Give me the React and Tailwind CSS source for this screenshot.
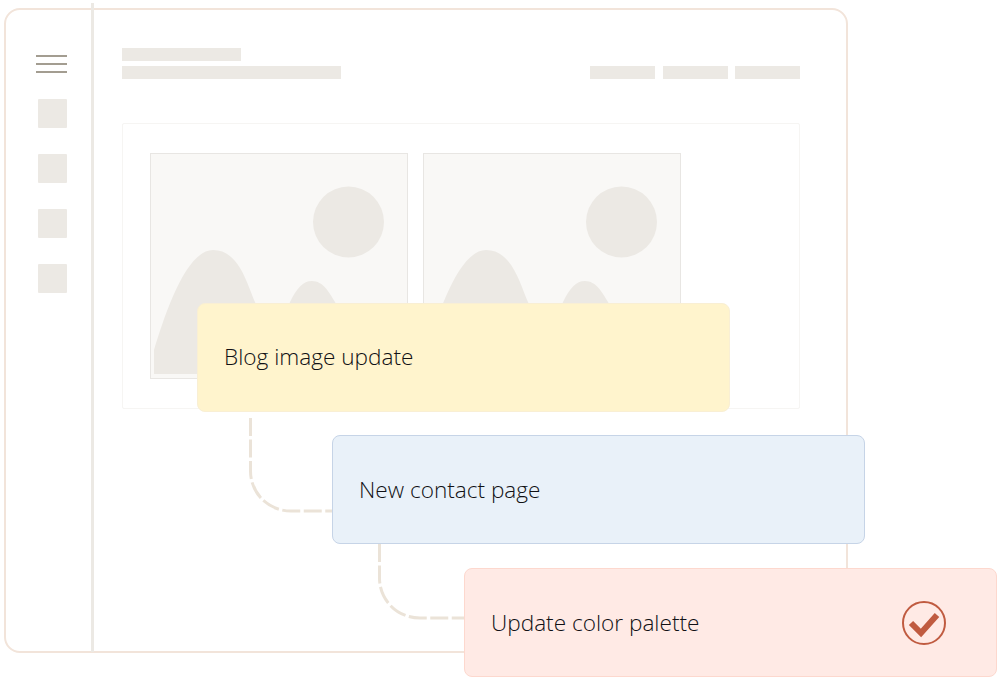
import React from "react";

const Thumb = () => {
  return (
    <div className="w-[258px] h-[226px] bg-[#f9f8f6] border border-[#e8e6e3]">
      <svg width="256" height="224" viewBox="0 0 256 224" className="block">
        <circle cx="197.500" cy="68" r="35.5" fill="#ece9e4" />
        <path
          d="M3 220V196C14 160 35 96 62 96C88 96 96 130 104 148C112 170 122 205 130 205C136 190 134 160 139 148C146 134 152 127 161 127C172 127 178 138 184 148C196 170 204 200 210 220Z"
          fill="#ece9e4"
        />
      </svg>
    </div>
  );
};

const Card = ({ className, children }) => {
  return (
    <div
      className={`absolute w-[533px] h-[109px] rounded-lg border flex items-center justify-between pl-[26px] text-[22.6px] font-light text-[#111115] ${className}`}
    >
      {children}
    </div>
  );
};

const App = () => {
  return (
    <div className="relative w-[1000px] h-[680px] bg-white overflow-hidden font-['Open_Sans',sans-serif]">
      <div className="pl-[4px] pt-[8px]">
        <div className="w-[844px] h-[645px] border-2 border-[#f2e4da] rounded-[16px] flex">
          <div className="w-[85px] shrink-0 pl-[30px] pt-[45px]">
            <div className="flex flex-col gap-[6.5px] w-[31px]">
              <div className="h-[1.5px] bg-[#a39d91]" />
              <div className="h-[1.5px] bg-[#a39d91]" />
              <div className="h-[1.5px] bg-[#a39d91]" />
            </div>
            <div className="flex flex-col gap-[26px] mt-[26px] ml-[2px]">
              <div className="w-[29px] h-[29px] rounded-[1px] bg-[#ece9e4]" />
              <div className="w-[29px] h-[29px] rounded-[1px] bg-[#ece9e4]" />
              <div className="w-[29px] h-[29px] rounded-[1px] bg-[#ece9e4]" />
              <div className="w-[29px] h-[29px] rounded-[1px] bg-[#ece9e4]" />
            </div>
          </div>
          <div className="w-[3px] shrink-0 -mt-[7px] -mb-[1px] bg-[#ece9e4]" />
          <div className="pl-[28px] pt-[38px] w-[706px]">
            <div className="flex justify-between items-end">
              <div>
                <div className="w-[119px] h-[13px] bg-[#ece9e4]" />
                <div className="w-[219px] h-[13px] mt-[5px] bg-[#ece9e4]" />
              </div>
              <div className="flex gap-[7.5px]">
                <div className="w-[65px] h-[13px] bg-[#ece9e4]" />
                <div className="w-[65px] h-[13px] bg-[#ece9e4]" />
                <div className="w-[65px] h-[13px] bg-[#ece9e4]" />
              </div>
            </div>
            <div className="w-[678px] h-[286px] mt-[44px] pl-[27px] pt-[29px] border border-[#f6f5f3] rounded-[2px] flex gap-[15px]">
              <Thumb />
              <Thumb />
            </div>
          </div>
        </div>
      </div>

      <svg
        width="1000"
        height="680"
        viewBox="0 0 1000 680"
        fill="none"
        className="absolute inset-0"
      >
        <path
          d="M250.500 418V471C250.500 493 268 511 291 511H333"
          stroke="#ebe3d8"
          strokeWidth="3"
          strokeDasharray="18 3.5"
        />
        <path
          d="M379.500 544V578C379.500 600 397 618 420 618H465"
          stroke="#ebe3d8"
          strokeWidth="3"
          strokeDasharray="18 3.5"
        />
      </svg>

      <Card className="left-[197px] top-[303px] pb-[2px] bg-[#fff4cd] border-[#f9efd4]">
        Blog image update
      </Card>
      <Card className="left-[332px] top-[435px] bg-[#e9f1f9] border-[#c6d4e7]">
        New contact page
      </Card>
      <Card className="left-[464px] top-[568px] bg-[#ffeae5] border-[#fdd8ce] pr-[50px]">
        Update color palette
        <svg width="44" height="44" viewBox="0 0 44 44" fill="none">
          <circle cx="22" cy="22" r="21" stroke="#c05b40" strokeWidth="2" />
          <path d="M9 22L19 32L35 14" stroke="#c05b40" strokeWidth="6" />
        </svg>
      </Card>
    </div>
  );
};

export default App;
